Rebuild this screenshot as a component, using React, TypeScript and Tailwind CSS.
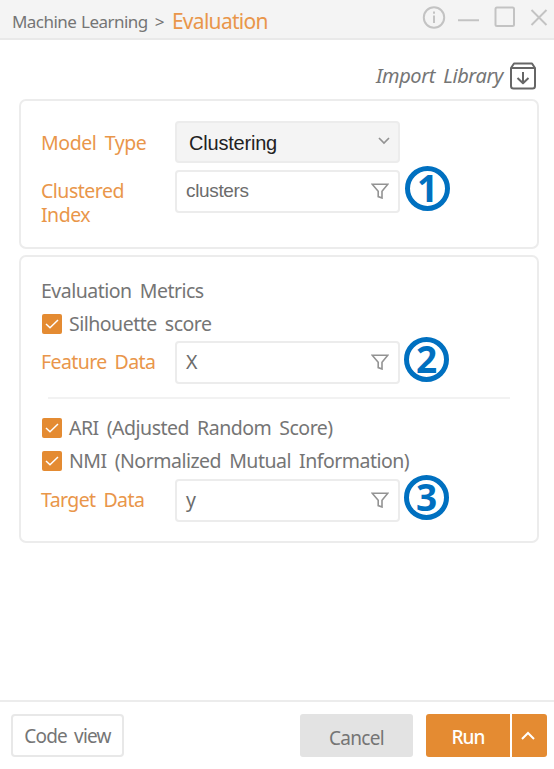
import React from "react";

const field = "w-[225px] shrink-0 rounded-[4px] border-2 border-[#ececec] flex items-center justify-between";

function Filter() {
  return (
    <svg width="18" height="16" viewBox="0 0 18 16" fill="none" stroke="#939393" strokeWidth="1.6">
      <path d="M1.2 1.2H16.8L11 8.2V15L7.2 13.6V8.2Z" />
    </svg>
  );
}

function Field({ value, className = "" }: { value: string; className?: string }) {
  return (
    <div className={`${field} bg-white pb-[2px] pl-[9px] pr-[9px] ${className}`}>
      <span className="text-[#6c6c6c]">{value}</span>
      <Filter />
    </div>
  );
}

function Marker({ n, className }: { n: string; className: string }) {
  return (
    <div
      className={`flex h-[45px] w-[45px] shrink-0 items-center justify-center rounded-full border-[5px] border-[#0070c0] font-['Open_Sans','Noto_Sans',sans-serif] text-[37px] font-bold leading-none tracking-normal text-[#0070c0] ${className}`}
    >
      <span className="pb-[2px]">{n}</span>
    </div>
  );
}

function Check({ label }: { label: string }) {
  return (
    <div className="flex items-center">
      <span className="ml-px mr-[7px] flex h-5 w-5 items-center justify-center rounded-[2px] bg-[#e48b32]">
        <svg width="14" height="10" viewBox="0 0 14 10" fill="none" stroke="white" strokeWidth="1.5">
          <path d="M1 5L5 8.8L13 1" />
        </svg>
      </span>
      <span className="whitespace-nowrap">{label}</span>
    </div>
  );
}

export default function App() {
  return (
    <div className="flex h-[769px] w-[554px] flex-col overflow-hidden bg-white font-['Noto_Sans',sans-serif] text-[19.5px] leading-6 tracking-[-0.5px] text-[#757575] [word-spacing:3.5px]">
      <header className="flex h-10 shrink-0 items-center border-b-2 border-[#e9e9e9] bg-[#f4f4f4] pl-3">
        <span className="mt-[6px] whitespace-nowrap text-[17px] tracking-[-0.55px] [word-spacing:1px]">Machine Learning</span>
        <span className="ml-[7px] mt-[6px] text-[17px]">&gt;</span>
        <span className="ml-[8px] mt-[4px] text-[21px] tracking-[-0.7px] text-[#e9964a]">Evaluation</span>
        <svg className="ml-auto" width="132" height="36" viewBox="0 0 132 36" fill="none" stroke="#c3c3c3" strokeWidth="2">
          <circle cx="12" cy="16.5" r="10.2" />
          <path d="M12 14.5V22M12 10.5V12.8M36 19.3H57" />
          <rect x="73.5" y="6.5" width="18.5" height="18.5" rx="1.5" />
          <path d="M109.5 9L124.5 24M124.5 9L109.5 24" />
        </svg>
      </header>
      <div className="flex h-[59px] shrink-0 items-center justify-end pr-[17px] pt-[12px]">
        <span className="whitespace-nowrap text-[20px] italic tracking-[-0.4px]">Import Library</span>
        <svg className="ml-[6px]" width="28" height="28" viewBox="0 0 28 28" fill="none" stroke="#666" strokeWidth="2" strokeLinejoin="round">
          <path d="M2 6L5 1.5H23L26 6V24Q26 26.5 23.5 26.5H4.5Q2 26.5 2 24ZM2 6H26M14 10V21M8.5 16L14 21.2L19.5 16" />
        </svg>
      </div>
      <section className="mx-[19px] h-[150px] w-[520px] shrink-0 rounded-[7px] border-2 border-[#ececec] pl-5 pt-5">
        <div className="flex h-[49px] items-start">
          <span className="w-[134px] shrink-0 whitespace-nowrap pt-[10px] tracking-[-0.4px] text-[#e9964a]">Model Type</span>
          <div className={`${field} h-[42px] bg-[#f4f4f4] pl-3 pr-[8px] font-['Liberation_Sans',sans-serif]`}>
            <span className="pt-px text-[20px] tracking-[-0.2px] text-[#222]">Clustering</span>
            <svg className="mb-[2px]" width="12" height="8" viewBox="0 0 12 8" fill="none" stroke="#939393" strokeWidth="1.7"><path d="M1 1L6 6L11 1" /></svg>
          </div>
        </div>
        <div className="flex items-start">
          <span className="w-[134px] shrink-0 pt-[9px] text-[#e9964a]">Clustered<br />Index</span>
          <Field value="clusters" className="h-[43px] font-['Liberation_Sans',sans-serif] text-[19px] tracking-[-0.35px]" />
          <Marker n="1" className="-mt-[4px] ml-[5px]" />
        </div>
      </section>
      <section className="mx-[19px] mt-[6px] h-[288px] w-[520px] shrink-0 rounded-[7px] border-2 border-[#ececec] pl-5 pt-[22px]">
        <div className="mb-[9px]">Evaluation Metrics</div>
        <Check label="Silhouette score" />
        <div className="mt-[5px] flex items-start">
          <span className="w-[134px] shrink-0 whitespace-nowrap pt-[9px] tracking-[-0.6px] text-[#e9964a]">Feature Data</span>
          <Field value="X" className="h-[43px]" />
          <Marker n="2" className="-mt-[4px] ml-[4px]" />
        </div>
        <div className="ml-[7px] mt-[13px] h-[2px] w-[462px] bg-[#f2f2f2]" />
        <div className="mt-[17px] flex flex-col gap-[9px]">
          <Check label="ARI (Adjusted Random Score)" />
          <Check label="NMI (Normalized Mutual Information)" />
        </div>
        <div className="mt-[6px] flex items-start">
          <span className="w-[134px] shrink-0 whitespace-nowrap pt-[9px] tracking-[-0.6px] text-[#e9964a]">Target Data</span>
          <Field value="y" className="h-[43px]" />
          <Marker n="3" className="-mt-[4px] ml-[4px]" />
        </div>
      </section>
      <footer className="mt-auto flex h-[69px] shrink-0 border-t-2 border-[#ececec] pl-[11px] pr-[7px] pt-3 text-[19px]">
        <button className="h-[43px] w-[113px] whitespace-nowrap rounded-[4px] border-2 border-[#e8e8e8] bg-white tracking-[-0.8px] [word-spacing:3px]">Code view</button>
        <button className="ml-auto h-[43px] w-[113px] rounded-[3px] bg-[#e3e3e3] pt-[5px] tracking-[-0.7px]">Cancel</button>
        <button className="ml-[13px] h-[43px] w-[84px] rounded-l-[3px] bg-[#e48b32] pt-[3px] font-medium tracking-[-0.9px] text-white">Run</button>
        <button className="ml-[2px] flex h-[43px] w-[35px] items-center justify-center rounded-r-[3px] bg-[#e48b32] pr-[3px]">
          <svg width="14" height="10" viewBox="0 0 14 10" fill="none" stroke="white" strokeWidth="2"><path d="M1 8L7 2L13 8" /></svg>
        </button>
      </footer>
    </div>
  );
}
